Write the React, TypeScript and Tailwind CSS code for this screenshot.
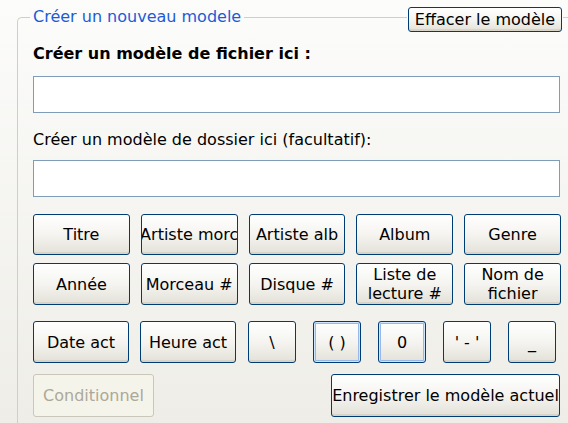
import React from "react";

const font = { fontFamily: '"DejaVu Sans", Verdana, sans-serif' };

function XPButton({
  children,
  className = "",
  focus = false,
  disabled = false,
}: {
  children: React.ReactNode;
  className?: string;
  focus?: boolean;
  disabled?: boolean;
}) {
  const base =
    "flex items-center justify-center overflow-hidden whitespace-nowrap rounded-[3px] border text-[16px] leading-[19px] text-center";
  const look = disabled
    ? "border-[#c9c7ba] text-[#aca899] bg-[#f5f4ea]"
    : "border-[#003c74] text-black bg-gradient-to-b from-[#ffffff] via-[#f5f4f0] to-[#e3e1d8] shadow-[inset_0_-2px_0_#d8d4c8]";
  const ring = focus
    ? " shadow-[inset_0_0_0_1px_#cee7ff,inset_0_0_0_2px_#98b8ea,inset_0_-2px_0_#69a0ea]"
    : "";
  return <div className={`${base} ${look}${ring} ${className}`}>{children}</div>;
}

export default function App() {
  return (
    <div
      className="w-[568px] h-[423px] overflow-hidden bg-gradient-to-b from-[#fcfcfb] to-[#eeede7] pt-[17px] pl-[17px]"
      style={font}
    >
      <div className="relative w-[600px] h-[440px] border-l border-t border-[#d0d0bf] rounded-tl-[5px] pl-[15px] pt-[26px]">
        <div className="absolute left-[12px] top-[-10px] px-[3px] bg-[#fbfbfa] text-[16px] leading-[18px] text-[#1c5bd6]">
          Créer un nouveau modele
        </div>
        <div className="absolute left-[389px] top-[-11px] px-[1px] bg-[#fbfbfa]">
          <XPButton className="w-[154px] h-[25px]">Effacer le modèle</XPButton>
        </div>

        <div className="w-[527px] flex flex-col">
          <div className="text-[16px] leading-[20px] font-bold text-black">
            Créer un modèle de fichier ici :
          </div>
          <div className="mt-[12px] h-[37px] border border-[#7f9db9] bg-white" />
          <div className="mt-[17px] text-[16px] leading-[20px] text-black">
            Créer un modèle de dossier ici (facultatif):
          </div>
          <div className="mt-[10px] h-[37px] border border-[#7f9db9] bg-white" />

          <div className="mt-[17px] grid grid-cols-5 gap-x-[11px] w-[528px]">
            <XPButton className="h-[41px]">Titre</XPButton>
            <XPButton className="h-[41px]">Artiste morc</XPButton>
            <XPButton className="h-[41px]">Artiste alb</XPButton>
            <XPButton className="h-[41px]">Album</XPButton>
            <XPButton className="h-[41px]">Genre</XPButton>
          </div>
          <div className="mt-[8px] grid grid-cols-5 gap-x-[11px] w-[528px]">
            <XPButton className="h-[42px]">Année</XPButton>
            <XPButton className="h-[42px]">Morceau #</XPButton>
            <XPButton className="h-[42px]">Disque #</XPButton>
            <XPButton className="h-[42px] whitespace-normal">
              <span>
                Liste de
                <br />
                lecture #
              </span>
            </XPButton>
            <XPButton className="h-[42px] whitespace-normal">
              <span>
                Nom de
                <br />
                fichier
              </span>
            </XPButton>
          </div>
          <div className="mt-[16px] flex gap-x-[11px] h-[42px]">
            <XPButton className="w-[96px]">Date act</XPButton>
            <XPButton className="w-[96px]">Heure act</XPButton>
            <div className="flex gap-x-[17px] pl-[1px]">
              <XPButton className="w-[48px]">\</XPButton>
              <XPButton className="w-[48px]" focus>
                ( )
              </XPButton>
              <XPButton className="w-[48px]" focus>
                0
              </XPButton>
              <XPButton className="w-[48px]">' - '</XPButton>
              <XPButton className="w-[48px]">_</XPButton>
            </div>
          </div>
          <div className="mt-[11px] flex justify-between items-start">
            <XPButton className="w-[121px] h-[43px]" disabled>
              Conditionnel
            </XPButton>
            <XPButton className="w-[229px] h-[43px]">Enregistrer le modèle actuel</XPButton>
          </div>
        </div>
      </div>
    </div>
  );
}
